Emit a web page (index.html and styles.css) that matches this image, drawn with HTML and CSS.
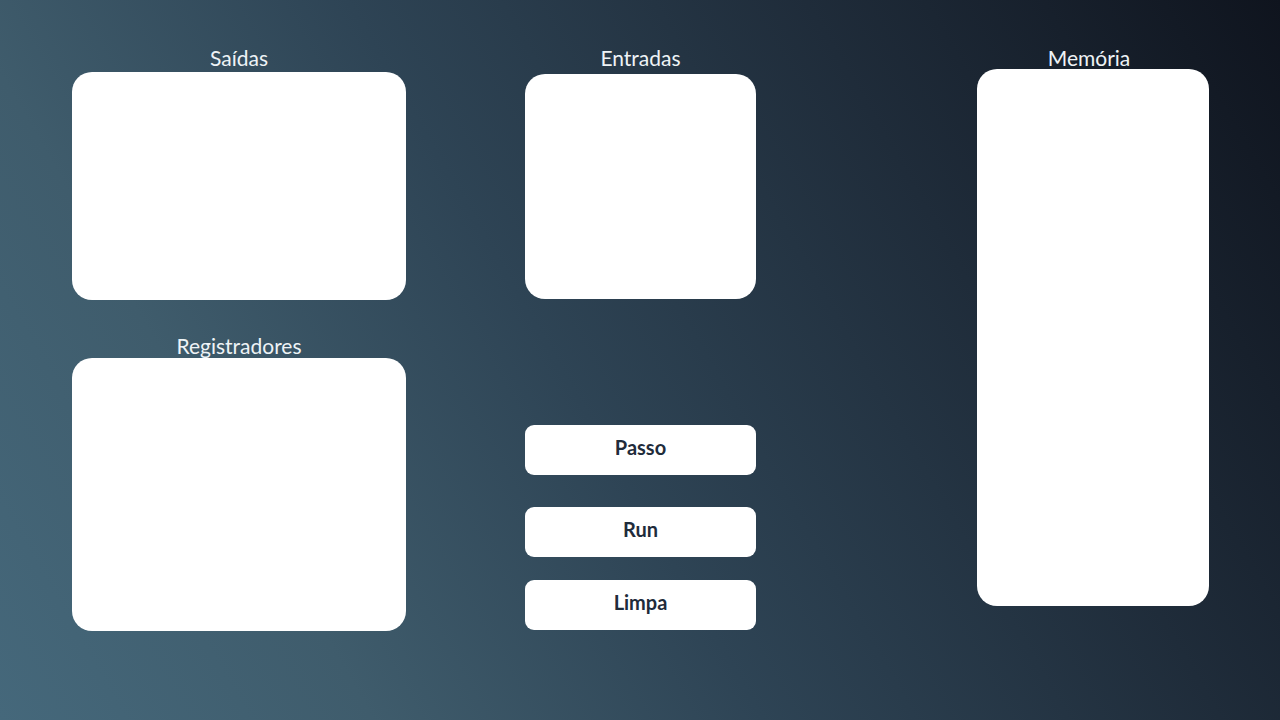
FILE: index.html
```html
<!DOCTYPE html>
<html lang="pt">
<head>
<meta charset="utf-8">
<title>Simulador</title>
<link rel="stylesheet" href="styles.css">
</head>
<body>
<main class="app">
  <section class="col col-left">
    <div class="block">
      <h2 class="label">Saídas</h2>
      <div class="panel panel-saidas"></div>
    </div>
    <div class="block block-reg">
      <h2 class="label">Registradores</h2>
      <div class="panel panel-reg"></div>
    </div>
  </section>
  <section class="col col-mid">
    <div class="block">
      <h2 class="label">Entradas</h2>
      <div class="panel panel-entradas"></div>
    </div>
    <div class="buttons">
      <button class="btn btn-passo">Passo</button>
      <button class="btn btn-run">Run</button>
      <button class="btn btn-limpa">Limpa</button>
    </div>
  </section>
  <section class="col col-right">
    <div class="block">
      <h2 class="label label-mem">Memória</h2>
      <div class="panel panel-mem"></div>
    </div>
  </section>
</main>
</body>
</html>
```
FILE: styles.css
```css
html, body {
  margin: 0;
  height: 100%;
}
body {
  width: 1280px;
  height: 720px;
  overflow: hidden;
  background: linear-gradient(60deg, #45687b 0%, #3f5c6c 22%, #2e4455 45%, #1f2c3a 72%, #0f141e 100%);
  font-family: Lato, "Noto Sans", sans-serif;
}
.app {
  display: flex;
  padding: 46px 0 0 72px;
  box-sizing: border-box;
  height: 720px;
}
.col {
  display: flex;
  flex-direction: column;
}
.col-left { width: 334px; }
.col-mid { width: 231px; margin-left: 119px; }
.col-right { width: 232px; margin-left: 221px; }
.block {
  display: flex;
  flex-direction: column;
  align-items: stretch;
}
.label {
  margin: 0;
  height: 24px;
  line-height: 24px;
  font-size: 21px;
  font-weight: 400;
  color: #eef3f6;
  text-align: center;
}
.label-mem { padding-right: 8px; }
.panel {
  background: #ffffff;
  border-radius: 20px;
}
.panel-saidas { height: 228px; margin-top: 2px; }
.block-reg { margin-top: 34px; }
.panel-reg { height: 273px; margin-top: 0; }
.panel-entradas { height: 225px; margin-top: 4px; }
.panel-mem { height: 537px; margin-top: -1px; }
.buttons {
  display: flex;
  flex-direction: column;
  margin-top: 126px;
}
.btn {
  height: 50px;
  border: none;
  border-radius: 9px;
  background: #ffffff;
  font-family: Lato, "Noto Sans", sans-serif;
  font-size: 20px;
  font-weight: 700;
  color: #1f2c3b;
  padding: 0 0 6px;
  cursor: pointer;
}
.btn-run { margin-top: 32px; }
.btn-limpa { margin-top: 23px; }
```
